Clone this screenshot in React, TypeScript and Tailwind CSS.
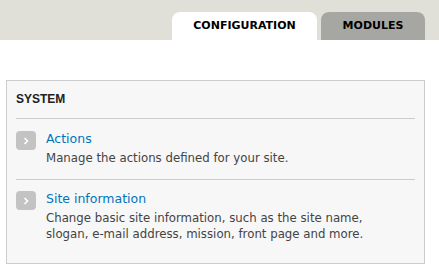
import React from 'react';

const items = [
  {
    title: 'Actions',
    description: ['Manage the actions defined for your site.'],
  },
  {
    title: 'Site information',
    description: [
      'Change basic site information, such as the site name,',
      'slogan, e-mail address, mission, front page and more.',
    ],
  },
];

const Chevron = () => (
  <span className="flex h-[19px] w-[20px] shrink-0 items-center justify-center rounded-[4px] bg-[#c3c3c3]">
    <svg width="6" height="8" viewBox="0 0 6 8">
      <path d="M1.5 1 L4.5 4 L1.5 7" fill="none" stroke="#ffffff" strokeWidth="1.6" />
    </svg>
  </span>
);

export default function App() {
  return (
    <div className="h-[275px] w-[439px] bg-white font-['DejaVu_Sans',sans-serif] text-[#333]">
      {/* tabs */}
      <div className="flex h-10 items-end justify-end gap-[4px] bg-[#e0e0d8] pr-[14px]">
        <div className="flex h-[28px] w-[145px] items-center justify-center rounded-t-[8px] bg-white text-[11px] font-bold text-black">
          CONFIGURATION
        </div>
        <div className="flex h-[28px] w-[104px] items-center justify-center rounded-t-[8px] bg-[#a6a7a2] text-[11px] font-bold text-black">
          MODULES
        </div>
      </div>

      <div className="px-[6px] pt-[40px]">
        <div className="h-[184px] w-[419px] border border-[#cccccc] bg-[#f7f7f7] px-[9px]">
          <h2 className="border-b border-[#cccccc] pb-[11px] pt-[11px] font-['Liberation_Sans',sans-serif] text-[12px] font-bold leading-[15px] text-[#222]">
            SYSTEM
          </h2>
          {items.map((item, i) => (
            <div
              key={item.title}
              className={`flex gap-[10px] ${i === 0 ? 'border-b border-[#cccccc] pb-[13px] pt-[12px]' : 'pt-[11px]'}`}
            >
              <Chevron />
              <div className="flex flex-col">
                <a className="text-[12.5px] leading-[16px] text-[#0074bd]">{item.title}</a>
                <div className="mt-[3px] flex flex-col">
                  {item.description.map((line) => (
                    <span key={line} className="text-[11.75px] leading-[16px] text-[#444]">
                      {line}
                    </span>
                  ))}
                </div>
              </div>
            </div>
          ))}
        </div>
      </div>
    </div>
  );
}
